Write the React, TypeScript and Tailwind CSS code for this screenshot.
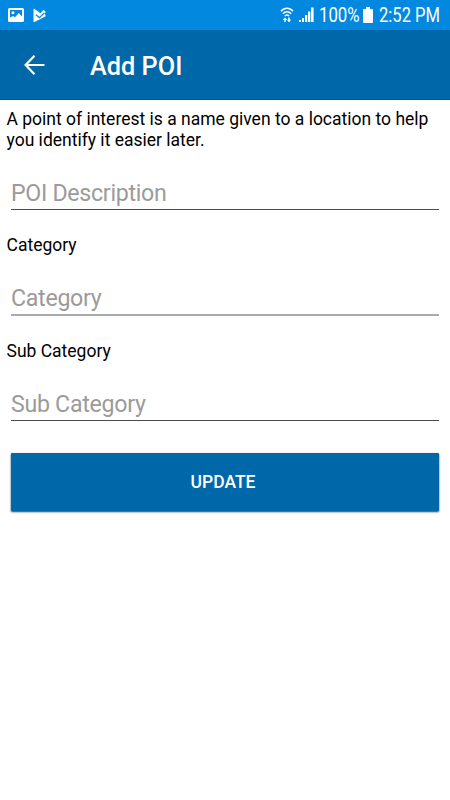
import { useState } from "react";

interface FieldProps {
    name: string;
    value: string;
    lineClass: string;
    onChange: (value: string) => void;
}

function ImageIcon() {
    return (
        <svg width="16" height="14" viewBox="0 0 16 14" fill="none">
            <rect x="1" y="1" width="14" height="12" rx="0.6" stroke="white" strokeWidth="2" />
            <circle cx="5" cy="4.8" r="1.5" fill="white" />
            <path d="M2 12V9.6L5 8l2 1.3L10.8 5 14 8.5V12z" fill="white" />
        </svg>
    );
}

function PlayCheckIcon() {
    return (
        <svg width="14" height="15" viewBox="0 0 14 15">
            <path d="M.5 1.300C.5.700 1 .7 1.600 1L6.300 4.200 7 5.500 10.700 1.700 12.800 4 11.500 5.800l1 1.400c.4.600.2 1-.4 1.400L1.600 14c-.6.300-1.100.1-1.100-.6z" fill="white" />
            <path d="m3 6.700 3.400 3L11.400 4.900" fill="none" stroke="#0288de" strokeWidth="1.300" />
        </svg>
    );
}

function WifiIcon() {
    return (
        <svg width="14" height="16" viewBox="0 0 14 16" fill="none" stroke="white" strokeWidth="1.5">
            <path d="M1 4.300c3.400-4 8.600-4 12 0" />
            <path d="M2.900 6.800c2.300-2.600 5.900-2.600 8.200 0" />
            <path d="M4.900 9c1.200-1.300 3-1.300 4.200 0" />
            <path d="M5 15v-2.500M9 10.500v3" strokeWidth="1.500" />
            <path d="m2.800 13 2.200-2.500L7.200 13zM6.800 12.700 9 15.200l2.200-2.500z" fill="white" stroke="none" />
        </svg>
    );
}

function SignalIcon() {
    return (
        <svg width="16" height="16" viewBox="0 0 16 16" fill="white">
            <rect x="0" y="13" width="2" height="2" />
            <rect x="3" y="11" width="2" height="4" />
            <rect x="6" y="8" width="2.2" height="7" />
            <rect x="9" y="4.5" width="2.3" height="10.5" />
            <rect x="12" y="0.5" width="2.6" height="14.5" />
        </svg>
    );
}

function StatusBar() {
    return (
        <div className="flex h-[30px] items-center bg-[#0288de] text-white">
            <div className="ml-2 flex items-center gap-[9px]">
                <ImageIcon />
                <PlayCheckIcon />
            </div>
            <div className="ml-auto flex items-center">
                <WifiIcon />
                <span className="ml-[5px]">
                    <SignalIcon />
                </span>
                <span className="ml-1 w-[41px] origin-left scale-x-[0.86] pt-[2px] text-[19.5px] leading-[30px] whitespace-nowrap">100%</span>
                <svg className="ml-[3px]" width="10" height="16" viewBox="0 0 10 16" fill="white">
                    <path d="M3 0h4v2h2.200q.8 0 .8.800v12.400q0 .8-.8.800H.8q-.8 0-.8-.8V2.800Q0 2 .8 2H3z" />
                </svg>
                <span className="ml-1.5 w-[71px] origin-left scale-x-[0.85] pt-[2px] text-[19.5px] leading-[30px] whitespace-nowrap">2:52 PM</span>
            </div>
        </div>
    );
}

function Field({ name, value, lineClass, onChange }: FieldProps) {
    return (
        <input
            aria-label={name}
            placeholder={name}
            value={value}
            onChange={(e) => onChange(e.target.value)}
            className={`block h-[36px] w-full pt-[2px] text-[23.2px] tracking-[-0.3px] text-black outline-none placeholder:text-[#9b9b9b] ${lineClass}`}
        />
    );
}

export default function App() {
    const [description, setDescription] = useState("");
    const [category, setCategory] = useState("");
    const [subCategory, setSubCategory] = useState("");

    return (
        <div className="flex h-[800px] w-[450px] flex-col bg-white font-['Roboto',sans-serif] text-black">
            <StatusBar />

            {/* App bar */}
            <header className="flex h-[70px] items-center border-b border-[#0056a4] bg-[#0067a8] text-white">
                <button type="button" aria-label="Back" className="ml-6">
                    <svg width="22" height="20" viewBox="0 0 22 20" fill="none" stroke="white" strokeWidth="2.2">
                        <path d="M20.500 10H2M10.500 .8 1.600 10l8.900 9.200" />
                    </svg>
                </button>
                <h1 className="ml-[44px] pt-[5px] text-[25.3px] leading-8 font-medium">Add POI</h1>
            </header>

            <form onSubmit={(e) => e.preventDefault()} className="flex flex-col pt-[9px]">
                <p className="pr-[6px] pl-[6.5px] text-[17.5px] leading-[21px]">
                    A point of interest is a name given to a location to help you identify it easier later.
                </p>
                <div className="mt-[23px] px-[11px]">
                    <Field name="POI Description" value={description} lineClass="border-b border-[#4b4b4b]" onChange={setDescription} />
                </div>

                <label className="mt-[25px] px-[6.5px] text-[17.5px] leading-[21px]">Category</label>
                <div className="mt-[24px] px-[11px]">
                    <Field name="Category" value={category} lineClass="border-b-2 border-[#ababab]" onChange={setCategory} />
                </div>

                <label className="mt-[25px] px-[6.5px] text-[17.5px] leading-[21px]">Sub Category</label>
                <div className="mt-[23px] px-[11px]">
                    <Field name="Sub Category" value={subCategory} lineClass="border-b border-[#4b4b4b]" onChange={setSubCategory} />
                </div>

                <button
                    type="submit"
                    className="mx-[11px] mt-8 h-[58px] rounded-[1px] bg-[#0067a8] pr-1 text-[17.5px] font-medium text-white shadow-[0_1px_2px_rgba(0,40,70,0.9)]"
                >
                    UPDATE
                </button>
            </form>
        </div>
    );
}
